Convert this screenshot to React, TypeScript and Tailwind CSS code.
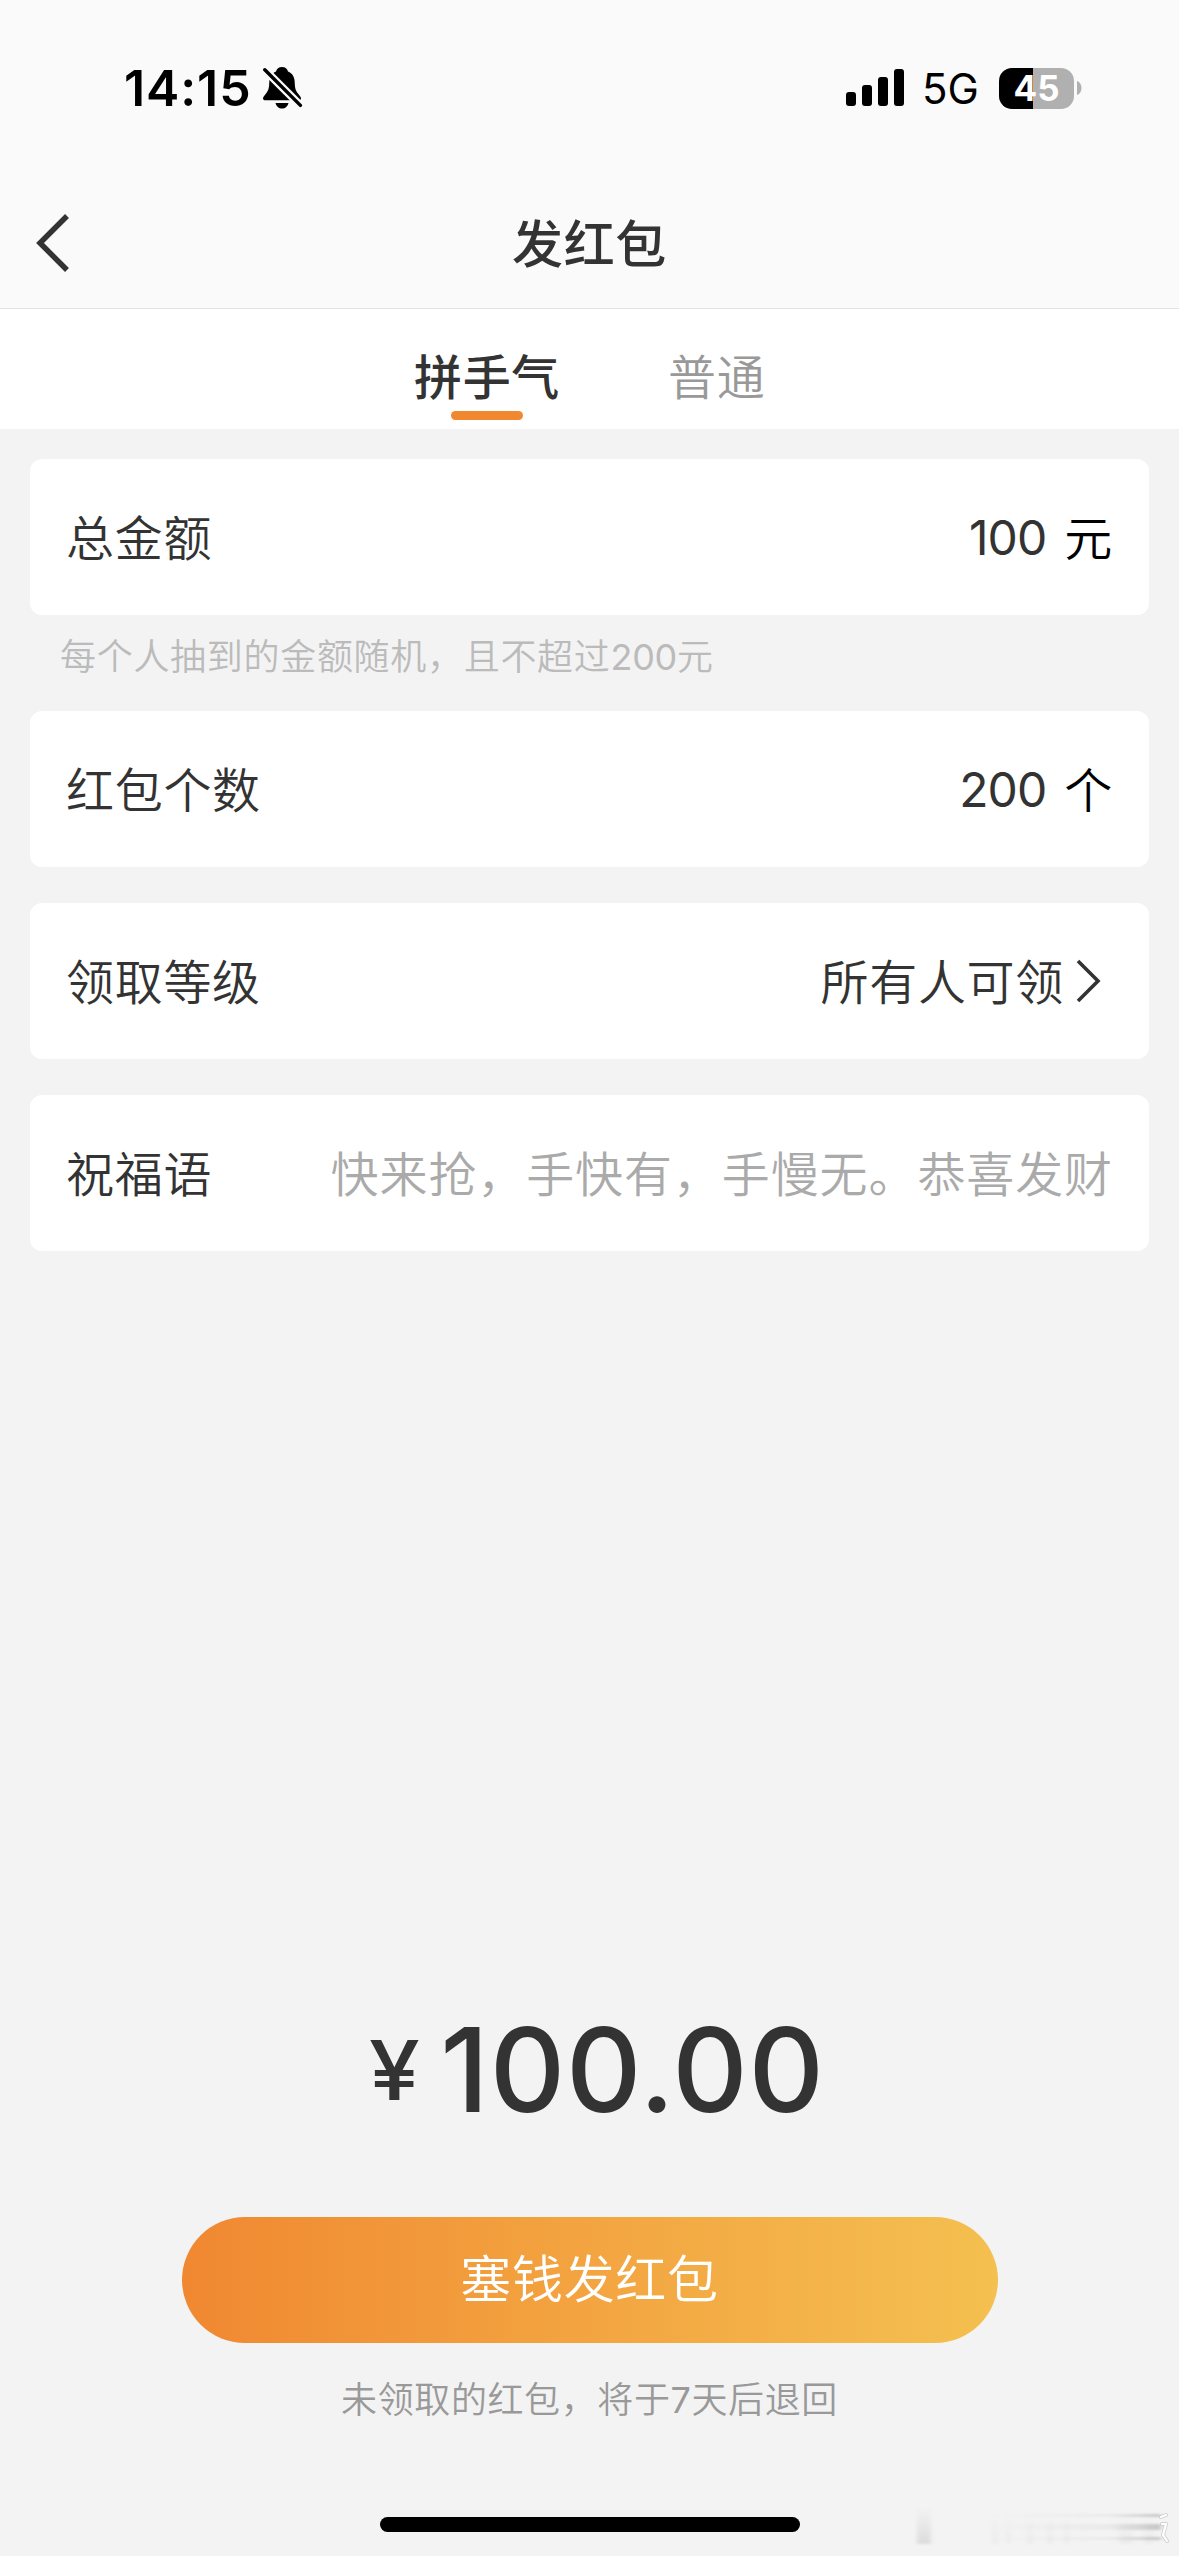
import type { ReactNode } from "react";

function StatusBar() {
  return (
    <div className="flex h-[110px] items-end justify-between pr-[97px] pl-[124px] font-['Inter'] text-black">
      <div className="flex h-[44px] items-center">
        <span className="w-[139px] text-[50px] leading-[44px] font-semibold tracking-[0.9px] whitespace-nowrap">14:15</span>
        <svg width="40" height="44" viewBox="0 0 40 44">
          <path
            d="M19 1c-3.200 0-5.500 2-6 4.600C8.500 7.500 6.500 11 6.300 16c-.2 6-.8 8.500-3.300 11.500C1 30 0 31 0 32.500 0 33.700 1 34.300 2.300 34.300h33.400c1.300 0 2.300-.6 2.300-1.800 0-1.500-1-2.500-3-5-2.500-3-3.100-5.500-3.300-11.500C31.500 11 29.500 7.500 25 5.600 24.500 3 22.200 1 19 1z"
            fill="#000"
          />
          <path d="M12.500 37h13c-.8 3.400-3.300 5.600-6.500 5.600s-5.700-2.200-6.500-5.600z" fill="#000" />
          <path d="M1 3l36 36" stroke="#fafafa" strokeWidth="8" />
          <path d="M1.800 3.800l35.600 35.600" stroke="#000" strokeWidth="3.400" strokeLinecap="round" />
        </svg>
      </div>
      <div className="flex h-[44px] items-center">
        <svg width="58" height="38" viewBox="0 0 58 38">
          <rect x="0" y="23" width="10" height="14" rx="3" />
          <rect x="16" y="16" width="10" height="21" rx="3" />
          <rect x="32" y="8" width="10" height="29" rx="3" />
          <rect x="48" y="0" width="10" height="37" rx="3" />
        </svg>
        <span className="ml-[18px] w-[77px] pt-[2px] text-[42px] leading-[44px]">5G</span>
        <div className="flex h-[41px] w-[75px] items-center justify-center rounded-[13px] bg-[linear-gradient(90deg,#000_34px,#b0b0b0_34px)]">
          <span className="text-[35px] leading-[41px] font-bold text-white">45</span>
        </div>
        <svg className="ml-[3px]" width="5" height="14" viewBox="0 0 5 14">
          <path d="M0 0c3 1 4.500 4 4.500 7S3 13 0 14z" fill="#b0b0b0" />
        </svg>
      </div>
    </div>
  );
}

function Card({ label, children }: { label: string; children: ReactNode }) {
  return (
    <div className="flex h-[156px] items-center justify-between rounded-[12px] bg-white px-[36px] pt-[3px] text-[48px] leading-[60px] font-[350] tracking-[0.7px] text-[#333]">
      <span>{label}</span>
      <div className="flex items-center">{children}</div>
    </div>
  );
}

function Amount({ value, unit }: { value: string; unit: string }) {
  return (
    <>
      <span className="-mt-[2px] font-normal tracking-[-0.9px]">{value}</span>
      <span className="ml-[18px] text-black">{unit}</span>
    </>
  );
}

/* Faint smudge with a pale glyph edge in the bottom right corner. */
function CornerMark() {
  return (
    <svg className="absolute right-[9px] bottom-[8px]" width="256" height="42" viewBox="0 0 256 42">
      <defs>
        <linearGradient id="fadeRight">
          <stop offset="0" stopColor="#999" stopOpacity="0" />
          <stop offset="0.7" stopColor="#999" stopOpacity="0.1" />
          <stop offset="1" stopColor="#888" stopOpacity="0.42" />
        </linearGradient>
        <linearGradient id="fadeDown" x2="0" y2="1">
          <stop offset="0" stopColor="#aaa" stopOpacity="0" />
          <stop offset="1" stopColor="#aaa" stopOpacity="0.32" />
        </linearGradient>
        <filter id="soft" x="-20%" y="-20%" width="140%" height="140%">
          <feGaussianBlur stdDeviation="2 1" />
        </filter>
      </defs>
      <g filter="url(#soft)">
        <rect x="3" y="2" width="14" height="36" fill="url(#fadeDown)" />
        <g fill="url(#fadeDown)" opacity="0.3">
          <rect x="78" y="8" width="6" height="30" />
          <rect x="92" y="8" width="5" height="30" />
          <rect x="113" y="8" width="6" height="30" />
          <rect x="133" y="8" width="6" height="30" />
          <rect x="150" y="8" width="5" height="30" />
          <rect x="205" y="8" width="14" height="30" />
          <rect x="230" y="8" width="10" height="30" />
        </g>
        <g fill="url(#fadeRight)">
          <rect x="75" y="8" width="172" height="3" />
          <rect x="75" y="18" width="172" height="6" />
          <rect x="75" y="31" width="172" height="3" />
        </g>
      </g>
      <g fill="none" strokeLinecap="round" strokeLinejoin="round">
        <path d="M247 11l5-2M248 18h4l-3 11 4 6" stroke="#bbb" strokeWidth="4" opacity="0.6" />
        <path d="M247 11l5-2M248 18h4l-3 11 4 6" stroke="#fff" strokeWidth="2.200" />
      </g>
    </svg>
  );
}

export default function App() {
  return (
    <div
      lang="zh-CN"
      className="relative flex h-[2556px] w-[1179px] flex-col bg-[#f3f3f3] font-['Inter','Noto_Sans_CJK_SC',sans-serif] text-[#333]"
    >
      <header className="flex h-[309px] flex-col border-b border-[#e3e3e3] bg-[#fafafa]">
        <StatusBar />
        <div className="mt-[99px] grid grid-cols-3 items-center px-[36px]">
          <svg width="34" height="60" viewBox="0 0 34 60">
            <path d="M31 3L4 30l27 27" fill="none" stroke="#333" strokeWidth="5.500" />
          </svg>
          <h1 className="pt-[4px] text-center text-[51px] leading-[64px] font-medium tracking-[0.7px]">发红包</h1>
        </div>
      </header>

      <nav className="flex h-[120px] bg-white pl-[413px] text-[48px] leading-[60px] tracking-[0.7px]">
        <div className="flex w-[148px] flex-col items-center pt-[39px]">
          <span className="font-medium">拼手气</span>
          <span className="mt-[3px] h-[9px] w-[72px] rounded-full bg-[#f08830]" />
        </div>
        <span className="ml-[107px] pt-[39px] font-[350] text-[#999]">普通</span>
      </nav>

      <main className="flex flex-col px-[30px] pt-[30px]">
        <Card label="总金额">
          <Amount value="100" unit="元" />
        </Card>
        <p className="h-[96px] pt-[15px] pl-[30px] text-[36px] leading-[54px] font-[350] tracking-[0.7px] text-[#bbb]">
          每个人抽到的金额随机，且不超过<span className="font-normal tracking-[-0.3px]">200</span>元
        </p>
        <div className="flex flex-col gap-[36px]">
          <Card label="红包个数">
            <Amount value="200" unit="个" />
          </Card>
          <Card label="领取等级">
            <span>所有人可领</span>
            <svg className="-mt-[3px] mr-[12px] ml-[12px]" width="25" height="46" viewBox="0 0 25 46">
              <path d="M2 3l20 20L2 43" fill="none" stroke="#333" strokeWidth="3.600" />
            </svg>
          </Card>
          <Card label="祝福语">
            <span className="tracking-[0.9px] text-[#aaa]">快来抢，手快有，手慢无。恭喜发财</span>
          </Card>
        </div>
      </main>

      <footer className="mt-auto flex flex-col items-center">
        <div className="flex h-[120px] items-center pl-[15px] font-medium">
          <span className="origin-left scale-x-110 text-[83px] leading-[120px]">¥</span>
          <span className="ml-[25px] text-[117px] leading-[120px] tracking-[0.8px]">100.00</span>
        </div>
        <button className="mt-[87px] h-[126px] w-[816px] rounded-full bg-linear-to-r from-[#f08831] to-[#f4c050] text-[51px] leading-[126px] font-[350] tracking-[0.7px] text-white">
          塞钱发红包
        </button>
        <p className="mt-[30px] text-[36px] leading-[54px] font-[350] tracking-[0.6px] text-[#999]">
          未领取的红包，将于<span className="font-normal">7</span>天后退回
        </p>
        <div className="mt-[90px] mb-[24px] h-[15px] w-[420px] rounded-full bg-black" />
      </footer>
      <CornerMark />
    </div>
  );
}
